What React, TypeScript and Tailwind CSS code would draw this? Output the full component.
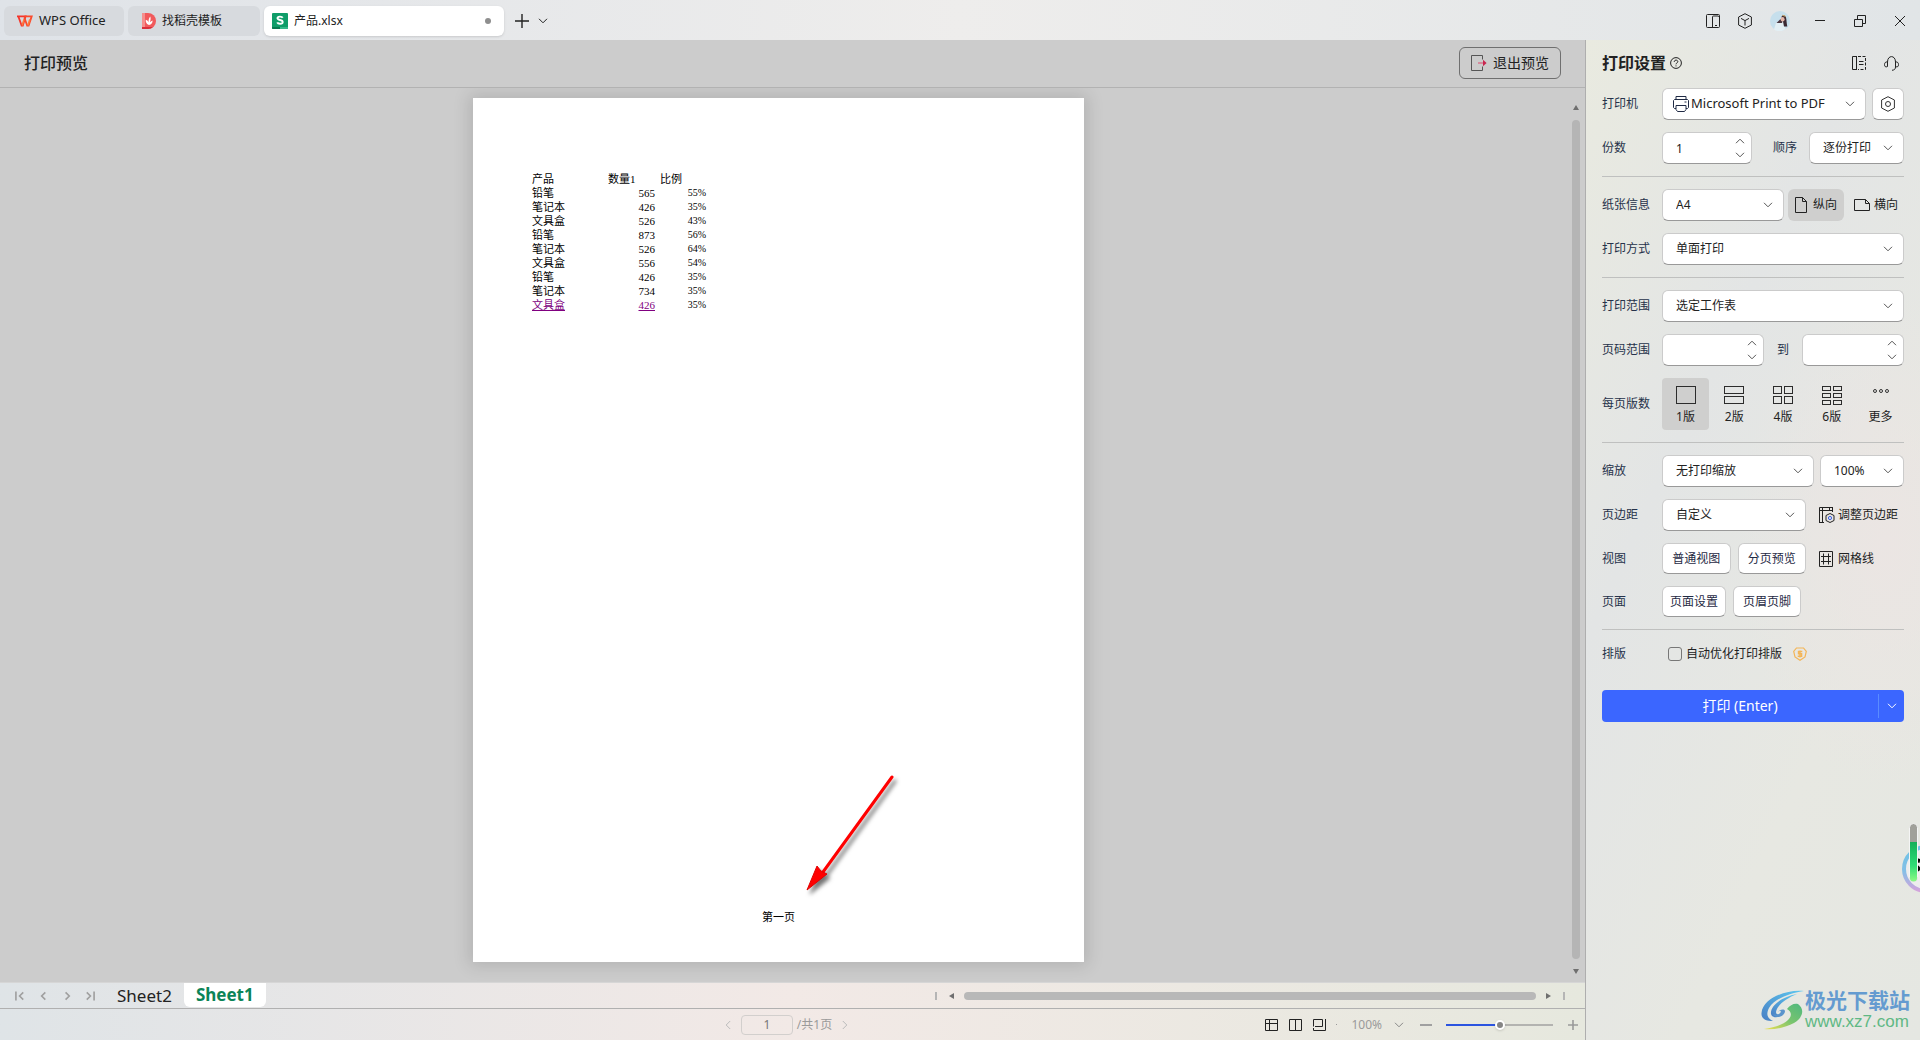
import React from 'react';
import clsx from 'clsx';

interface IconProps {
  className?: string;
}

const Chevron: React.FC<IconProps> = ({ className }) => (
  <svg viewBox="0 0 10 6" className={clsx('h-1.5 w-2.5 fill-none stroke-current', className)}>
    <path d="M1 0.8 L5 4.8 L9 0.8" />
  </svg>
);

const WpsLogo = () => (
  <svg viewBox="0 0 16 12" className="h-3 w-4 shrink-0 fill-none">
    <path d="M0 1.300H8.500L5.800 10.500H4.600L1.300 1.300" stroke="#f5352b" strokeWidth="1.800" />
    <path d="M7.500 1.300H14.700L11.600 10.500H10.200L7.300 2.500" stroke="#fa4a2c" strokeWidth="1.800" />
    <path d="M5.200 10.500L7 4.500M10.900 10.500L12.800 4.500" stroke="#ff7a3c" strokeWidth="1.600" />
  </svg>
);

const TemplateLogo = () => (
  <svg viewBox="0 0 14 16" className="h-4 w-3.5 shrink-0">
    <path d="M0 0h6a8 8 0 0 1 0 16H0z" fill="#f15a5c" />
    <path d="M0 0h3v14H0z" fill="#f58f8d" />
    <path d="M0 14h11a8 8 0 0 1-5 2H0z" fill="#d92f3a" />
    <path d="M7 12C4 11 3.600 8.500 3.800 6.800C5.400 7.400 6.200 8.200 6.600 9.400C6.400 6.800 7 4.800 8.200 3.400C9 5.200 8.600 7 7.900 9.200C8.700 8.300 9.600 7.700 10.600 7.400C10.600 10 9.400 11.500 7 12z" fill="#fff" />
  </svg>
);

const SheetLogo = () => (
  <svg viewBox="0 0 16 16" className="size-4 shrink-0">
    <rect width="16" height="16" rx="1" fill="#0f9d69" />
    <path d="M0 14h8v2H1a1 1 0 0 1-1-1z" fill="#087a50" />
    <path d="M8 14h8v1a1 1 0 0 1-1 1H8z" fill="#35b889" />
    <path d="M10.700 4.700C9.900 3.300 5.500 3 5.500 5.300C5.500 7.600 10.700 6.300 10.700 8.900C10.700 11.400 6 11.100 5.200 9.400" fill="none" stroke="#fff" strokeWidth="1.900" />
  </svg>
);

const lineIcon = 'shrink-0 fill-none stroke-current';

const PanelIcon = () => (
  <svg viewBox="0 0 14 14" className={clsx(lineIcon, 'size-3.5')}>
    <rect x="0.500" y="0.500" width="13" height="13" rx="1" />
    <path d="M6.500 13.500V3a1 1 0 0 1 1-1h4.500a1 1 0 0 1 1 1M9 11.500h2" />
  </svg>
);

const CubeIcon = () => (
  <svg viewBox="0 0 14 16" className={clsx(lineIcon, 'h-4 w-3.5')}>
    <path d="M7 0.700L13.400 4V12L7 15.300L0.600 12V4z" />
    <path d="M3 5.400L7 7.600L11 5.400M7 7.600V12.500" />
  </svg>
);

const Avatar = () => (
  <svg viewBox="0 0 20 20" className="size-5 shrink-0">
    <circle cx="10" cy="10" r="10" fill="#c6dfec" />
    <path d="M4 18.500L6 12L10 9L14 12L15.500 18A10 10 0 0 1 4 18.500z" fill="#e3eff4" />
    <path d="M11.500 6C12 3.800 15 3.300 16 6.500C16.700 9 16.500 12 17.300 15.500L14 15.500L13 10.500z" fill="#3b2a33" />
    <path d="M6.500 12L10.500 8L12.500 10.500L12 12z" fill="#4b3740" />
    <ellipse cx="12.600" cy="8.200" rx="2" ry="2.300" fill="#e3b5a8" />
    <path d="M12.500 4.300L15.500 5.300" stroke="#d8b36a" />
  </svg>
);

const RestoreIcon = () => (
  <svg viewBox="0 0 12 12" className={clsx(lineIcon, 'size-3')}>
    <path d="M0.500 4.500H8.500V11.500H0.500zM3.500 4.500V0.500H11.500V8.500H8.500" />
  </svg>
);

const CloseIcon = () => (
  <svg viewBox="0 0 12 12" className={clsx(lineIcon, 'size-3')}>
    <path d="M1 1L11 11M11 1L1 11" />
  </svg>
);

const HelpIcon = () => (
  <svg viewBox="0 0 12 12" className={clsx(lineIcon, 'size-3')}>
    <circle cx="6" cy="6" r="5.400" />
    <path d="M4.200 4.900C4.200 2.500 7.800 2.600 7.800 4.700C7.800 5.900 6 5.900 6 7.300M6 8.400V9.400" />
  </svg>
);

const DockIcon = () => (
  <svg viewBox="0 0 14 14" className={clsx(lineIcon, 'size-3.5')}>
    <path d="M5 0.500H0.500V13.500H5M4.500 0.500V13.500M7 5.500H11.500M7 8.500H11.500" />
    <path d="M6 0.500H13.500V13.500H6" strokeDasharray="3 1.500" />
  </svg>
);

const HeadsetIcon = () => (
  <svg viewBox="0 0 15 15" className={clsx(lineIcon, 'size-[15px]')}>
    <path d="M3.500 10.500V6C3.500 -1.200 11.500 -1.200 11.500 6V11C11.500 13 10.500 14 8 14.300" />
    <path d="M3.500 6C1.500 5.500 0.500 7 0.500 8.500C0.500 10.500 1.500 11.500 3.500 10.500M11.500 6C13.500 5.500 14.500 7 14.500 8.500C14.500 10.500 13.500 11.500 11.500 10.500" />
  </svg>
);

const PrinterIcon = () => (
  <svg viewBox="0 0 16 16" className={clsx(lineIcon, 'size-4')}>
    <path d="M3 3.500V0.500H13V3.500M3 12.500H1.500L0.500 11.500V4.500L1.500 3.500H14.500L15.500 4.500V11.500L14.500 12.500H13M11.500 6H13.500" />
    <path d="M3 9.500H13V13.500L11.500 15.500H4.500L3 13.500z" />
  </svg>
);

const GearIcon = () => (
  <svg viewBox="0 0 14 16" className={clsx(lineIcon, 'h-4 w-3.5')}>
    <path d="M7 0.700L13.400 4V12L7 15.300L0.600 12V4z" />
    <circle cx="7" cy="8" r="2.500" />
  </svg>
);

const ExitIcon = () => (
  <svg viewBox="0 0 16 16" className="size-4 shrink-0 fill-none">
    <path d="M11.500 4.500V0.500H0.500V15.500H11.500V11.500" stroke="#555" />
    <path d="M7 8H13" stroke="#d8708a" strokeWidth="1.400" />
    <path d="M12 4.800L15.600 8L12 11.200z" fill="#c8264f" />
  </svg>
);

const PortraitIcon = () => (
  <svg viewBox="0 0 12 16" className={clsx(lineIcon, 'h-4 w-3')}>
    <path d="M0.500 0.500H7.500L11.500 4.500V15.500H0.500zM7.500 0.500V4.500H11.500" />
  </svg>
);

const LandscapeIcon = () => (
  <svg viewBox="0 0 16 12" className={clsx(lineIcon, 'h-3 w-4')}>
    <path d="M0.500 0.500H11.500L15.500 4.500V11.500H0.500zM11.500 0.500V4.500H15.500" />
  </svg>
);

const MarginIcon = () => (
  <svg viewBox="0 0 16 16" className={clsx(lineIcon, 'size-4')}>
    <path d="M5 15.500H0M0.500 16V0.500H14M3.500 0V15.500M0.500 3.500H14M13.500 0V5M10.500 0.500V3.500" />
    <path d="M11 6.500L15 8.500V13.500L11 15.500L7 13.500V8.500z" />
    <circle cx="11" cy="11" r="1.600" stroke="#3a62e8" />
  </svg>
);

const GridIcon = () => (
  <svg viewBox="0 0 14 16" className={clsx(lineIcon, 'h-4 w-3.5')}>
    <path d="M0.500 0.500H13.500V15.500H0.500zM4.500 2.500V13.500M9.500 2.500V13.500M2 5.500H12M2 10.500H12" />
  </svg>
);

const CoinIcon = () => (
  <svg viewBox="0 0 14 14" className="size-3.5 shrink-0 fill-none stroke-[#f3b557]">
    <path d="M3.500 1H10.500L13.300 4.500L12 10L7 13.300L2 10L0.700 4.500z" strokeWidth="1.200" />
    <path d="M9.300 4.500H5.500V6.800H8.600V9.300H4.700M7 3.400V10.400" strokeWidth="1.400" />
  </svg>
);

const Select: React.FC<{ label: string; value: string; className?: string; pad?: string; icon?: React.ReactNode }> = ({
  label,
  value,
  className,
  pad = 'pl-[13px] text-xs',
  icon,
}) => (
  <div
    className={clsx(
      'relative flex h-8 items-center rounded-md border border-[#cbcbcb] border-b-[#999] bg-white text-[#222]',
      className
    )}
  >
    {icon}
    <select aria-label={label} defaultValue={value} className={clsx('h-full w-full appearance-none bg-transparent outline-none', pad)}>
      <option>{value}</option>
    </select>
    <Chevron className="pointer-events-none absolute right-2.5 text-[#555]" />
  </div>
);

const NumberField: React.FC<{ id: string; value?: string; className?: string }> = ({ id, value = '', className }) => (
  <div className={clsx('flex h-8 items-center rounded-md border border-[#cbcbcb] border-b-[#999] bg-white', className)}>
    <input id={id} type="text" defaultValue={value} className="h-full w-full min-w-0 bg-transparent pl-[13px] text-xs text-[#222] outline-none" />
    <div className="flex flex-col gap-2 pr-1.5 text-[#555]">
      <button aria-label="增加"><Chevron className="block h-1.5 w-2 rotate-180" /></button>
      <button aria-label="减少"><Chevron className="block h-1.5 w-2" /></button>
    </div>
  </div>
);

const Row: React.FC<{ label: string; htmlFor?: string; children: React.ReactNode }> = ({ label, htmlFor, children }) => (
  <div className="flex items-center">
    <label htmlFor={htmlFor} className="w-15 shrink-0 text-xs text-[#26324a]">{label}</label>
    <div className="flex min-w-0 flex-1 items-center">{children}</div>
  </div>
);

const PillButton: React.FC<{ children: React.ReactNode; className?: string }> = ({ children, className }) => (
  <button className={clsx('h-[31px] rounded-md border border-[#cbcbcb] border-b-[#999] bg-white text-xs text-[#1f2a44]', className)}>
    {children}
  </button>
);

const Divider = () => <hr className="border-[#bfc0bf]" />;

const layouts = [
  { name: '1版', cols: 1, rows: 1 },
  { name: '2版', cols: 1, rows: 2 },
  { name: '4版', cols: 2, rows: 2 },
  { name: '6版', cols: 2, rows: 3 },
];

const LayoutGlyph: React.FC<{ cols: number; rows: number }> = ({ cols, rows }) => {
  const cellW = cols === 1 ? 19 : 8;
  const cellH = rows === 1 ? 17 : rows === 2 ? 7 : 4;
  const stepY = rows === 2 ? 10 : 7;
  const cells = [];
  for (let r = 0; r < rows; r++) {
    for (let c = 0; c < cols; c++) {
      cells.push(<rect key={`${r}-${c}`} x={0.5 + c * 11} y={0.5 + r * stepY} width={cellW} height={cellH} />);
    }
  }
  return <svg viewBox="0 0 20 19" className="h-[19px] w-5 fill-none stroke-[#2c2c2c]">{cells}</svg>;
};

const TitleBar = () => (
  <header className="flex h-10 items-center bg-linear-to-r from-[#dfe3e8] via-[#eeedec] to-[#e1e5e7] pt-0.5 pl-1 text-xs text-[#222]">
    <button className="flex h-[30px] w-30 items-center gap-1.5 rounded-md bg-[#d7dade] pl-[13px] text-[13px]">
      <WpsLogo />
      WPS Office
    </button>
    <button className="ml-1 flex h-[30px] w-[132px] items-center gap-1.5 rounded-md bg-[#d7dade] pl-3.5">
      <TemplateLogo />
      找稻壳模板
    </button>
    <button className="ml-1 flex h-[30px] w-60 items-center gap-1.5 rounded-md bg-white pr-[13px] pl-2 shadow-sm">
      <SheetLogo />
      产品.xlsx
      <span className="ml-auto size-1.5 rounded-full bg-[#8e8e8e]" />
    </button>
    <button aria-label="新建标签" className="ml-2.5">
      <svg viewBox="0 0 16 16" className={clsx(lineIcon, 'size-4')}><path d="M8 1V15M1 8H15" strokeWidth="1.400" /></svg>
    </button>
    <button aria-label="标签列表" className="ml-2"><Chevron className="w-2" /></button>
    <div className="ml-auto flex items-center pr-3.5">
      <button aria-label="侧栏" className="mr-[18px]"><PanelIcon /></button>
      <button aria-label="应用" className="mr-[18px]"><CubeIcon /></button>
      <button aria-label="账户" className="mr-6"><Avatar /></button>
      <button aria-label="最小化" className="mr-7">
        <svg viewBox="0 0 12 12" className={clsx(lineIcon, 'size-3')}><path d="M1 5.500H11" /></svg>
      </button>
      <button aria-label="还原" className="mr-7"><RestoreIcon /></button>
      <button aria-label="关闭"><CloseIcon /></button>
    </div>
  </header>
);

const sheetRows = [
  ['铅笔', '565', '55%'],
  ['笔记本', '426', '35%'],
  ['文具盒', '526', '43%'],
  ['铅笔', '873', '56%'],
  ['笔记本', '526', '64%'],
  ['文具盒', '556', '54%'],
  ['铅笔', '426', '35%'],
  ['笔记本', '734', '35%'],
  ['文具盒', '426', '35%'],
];

const PaperPage = () => (
  <div className="relative flex aspect-[210/297] w-[611px] flex-col items-center justify-between bg-white pt-[74px] pb-[38px] font-['Liberation_Serif','Noto_Sans_CJK_SC',serif] text-[11px] leading-[14px] text-black shadow-[0_0_16px_4px_rgba(0,0,0,0.12)]">
    <table className="ml-[59px] table-fixed self-start">
      <thead>
        <tr className="text-left">
          <th className="w-[76px] p-0 font-normal">产品</th>
          <th className="w-[47px] p-0 font-normal">数量1</th>
          <th className="w-[51px] p-0 pl-[5px] font-normal">比例</th>
        </tr>
      </thead>
      <tbody>
        {sheetRows.map(([name, count, ratio], i) => {
          const linked = i === sheetRows.length - 1;
          return (
            <tr key={i}>
              <td className={clsx('p-0', linked && 'text-[#800080] underline')}>{name}</td>
              <td className={clsx('p-0 text-right', linked && 'text-[#800080] underline')}>{count}</td>
              <td className="p-0 text-right text-[10px]">{ratio}</td>
            </tr>
          );
        })}
      </tbody>
    </table>
    <p>第一页</p>
    <svg viewBox="0 0 100 130" className="absolute top-[670px] left-[326px] h-[130px] w-[100px] drop-shadow-[3px_4px_2px_rgba(0,0,0,0.55)]">
      <path d="M93 9L24 104" stroke="#f00" strokeWidth="3" strokeLinecap="round" />
      <path d="M8 122L18 98L22 103L28 106Z" fill="#f00" stroke="#e00000" strokeLinejoin="round" />
    </svg>
  </div>
);

const PreviewArea = () => (
  <section className="flex flex-1 flex-col bg-[#cccccc]">
    <div className="flex h-12 items-center justify-between border-b border-[#b2b2b2] px-6 pb-0.5">
      <h1 className="text-base font-medium text-[#222]">打印预览</h1>
      <button className="flex h-8 w-[102px] items-center justify-center gap-1.5 rounded-md border border-[#6f6f6f] text-sm text-[#222]">
        <ExitIcon />
        退出预览
      </button>
    </div>
    <div className="flex flex-1">
      <div className="flex flex-1 items-start justify-center overflow-hidden pt-2.5 pb-[18px]">
        <PaperPage />
      </div>
      <div className="flex w-7 flex-col items-center pt-[17px] pb-2 pl-2.5">
        <span className="border-x-3 border-b-5 border-x-transparent border-b-[#6f6f6f]" />
        <span className="my-2.5 w-2 flex-1 rounded-full bg-[#b5b5b5]" />
        <span className="border-x-3 border-t-5 border-x-transparent border-t-[#6f6f6f]" />
      </div>
    </div>
  </section>
);

const SheetTabs = () => (
  <nav className="flex h-[27px] items-center border-t border-b border-t-[#d6d6d6] border-b-[#b0b0b0] pr-5">
    <div className="flex items-center gap-3 pl-[15px] text-[#a0a0a0]">
      {['M1 1V11M9 2L5 6L9 10', 'M8 2L4 6L8 10', 'M5 2L9 6L5 10', 'M3 2L7 6L3 10M11 1V11'].map((d) => (
        <button key={d} aria-label="切换工作表">
          <svg viewBox="0 0 12 12" className={clsx(lineIcon, 'block h-3 w-[11px]')}><path d={d} strokeWidth="1.800" /></svg>
        </button>
      ))}
    </div>
    <button className="ml-5 px-0.5 text-[17px] leading-6 text-[#222]">Sheet2</button>
    <button className="ml-2.5 h-6 self-start rounded-b-md bg-white px-3 text-[17px] leading-6 font-bold text-[#0b8457]">Sheet1</button>
    <div className="ml-auto flex w-[630px] items-center">
      <span className="h-2 w-0.5 bg-[#b5b5b5]" />
      <span className="mr-2.5 ml-3 border-y-3 border-r-5 border-y-transparent border-r-[#6f6f6f]" />
      <span className="h-2 flex-1 rounded-full bg-[#b8b8b8]" />
      <span className="mr-3 ml-2.5 border-y-3 border-l-5 border-y-transparent border-l-[#6f6f6f]" />
      <span className="h-2 w-0.5 bg-[#b5b5b5]" />
    </div>
  </nav>
);

const StatusBar = () => (
  <footer className="grid h-[31px] grid-cols-[1fr_auto_1fr] items-center text-xs text-[#9a9a9a]">
    <span />
    <div className="flex items-center pr-3">
      <button aria-label="上一页"><Chevron className="rotate-90 text-[#bbb]" /></button>
      <input aria-label="页码" defaultValue="1" className="mx-2 h-5 w-[52px] rounded border border-[#d2cfcd] bg-transparent text-center text-[#777]" />
      <span className="-ml-1 pr-2">/共1页</span>
      <button aria-label="下一页"><Chevron className="-rotate-90 text-[#bbb]" /></button>
    </div>
    <div className="flex items-center justify-end pr-1.5">
      <div className="flex gap-[11px] text-[#222]">
        <button aria-label="普通视图">
          <svg viewBox="0 0 13 12" className={clsx(lineIcon, 'block h-3 w-[13px]')}><path d="M0.500 0.500H12.500V11.500H0.500zM0.500 4.500H12.500M4.500 0.500V11.500" /></svg>
        </button>
        <button aria-label="分页视图">
          <svg viewBox="0 0 13 12" className={clsx(lineIcon, 'block h-3 w-[13px]')}><path d="M0.500 0.500H12.500V11.500H0.500zM6.500 0.500V11.500" /></svg>
        </button>
        <button aria-label="页面布局">
          <svg viewBox="0 0 13 12" className={clsx(lineIcon, 'block h-3 w-[13px]')}><path d="M0.500 7.500V0.500H9.500V7.500H2M12.500 0V11.500H0.500V9" /></svg>
        </button>
      </div>
      <span className="ml-2.5 size-px bg-[#999]" />
      <span className="ml-3.5">100%</span>
      <button aria-label="缩放比例"><Chevron className="ml-3 w-2 text-[#888]" /></button>
      <button aria-label="缩小" className="ml-4 h-4 w-3">
        <span className="block h-0.5 w-3 bg-[#a0a0a0]" />
      </button>
      <input
        type="range"
        aria-label="缩放"
        defaultValue={50}
        className="mx-3.5 h-3 w-[107px] appearance-none bg-[linear-gradient(90deg,#2b54e0_50%,#b3b3b0_50%)] bg-[length:100%_2px] bg-center bg-no-repeat [&::-webkit-slider-thumb]:size-2.5 [&::-webkit-slider-thumb]:appearance-none [&::-webkit-slider-thumb]:rounded-full [&::-webkit-slider-thumb]:border-2 [&::-webkit-slider-thumb]:border-white [&::-webkit-slider-thumb]:bg-[#858585] [&::-webkit-slider-thumb]:shadow-sm"
      />
      <button aria-label="放大">
        <svg viewBox="0 0 12 12" className={clsx(lineIcon, 'block size-3')}><path d="M6 1V11M1 6H11" strokeWidth="1.600" /></svg>
      </button>
    </div>
  </footer>
);

const PrintSettings = () => (
  <aside className="w-[335px] shrink-0 border-l border-[#aeaeae] bg-[radial-gradient(ellipse_at_90%_50%,#ebe5e3_0%,transparent_35%),linear-gradient(115deg,#e9eae0_0%,#e3e5e5_35%,#e7e8e2_70%,#e5e7e2_100%)] px-4">
    <div className="flex h-12 items-center pb-0.5 text-[#222]">
      <h2 className="text-base font-bold">打印设置</h2>
      <button aria-label="帮助" className="ml-1"><HelpIcon /></button>
      <button aria-label="停靠" className="ml-auto"><DockIcon /></button>
      <button aria-label="客服" className="mr-[5px] ml-[18px]"><HeadsetIcon /></button>
    </div>
    <div className="flex flex-col gap-3">
      <Row label="打印机">
        <Select label="打印机" value="Microsoft Print to PDF" className="flex-1 pl-2.5" pad="pl-0.5 text-[13px]" icon={<span className="text-[#1f2a44]"><PrinterIcon /></span>} />
        <button aria-label="打印机属性" className="ml-1.5 flex size-8 items-center justify-center rounded-md border border-[#cbcbcb] border-b-[#999] bg-white text-[#333]">
          <GearIcon />
        </button>
      </Row>
      <Row label="份数" htmlFor="copies">
        <NumberField id="copies" value="1" className="w-[90px]" />
        <span className="ml-[21px] flex-1 text-xs text-[#26324a]">顺序</span>
        <Select label="顺序" value="逐份打印" className="w-[95px]" />
      </Row>
      <Divider />
      <Row label="纸张信息">
        <Select label="纸张" value="A4" className="flex-1" />
        <button className="ml-1 flex h-8 w-14 items-center justify-center gap-1.5 rounded-md bg-[#cfcfce] text-xs text-[#222]">
          <PortraitIcon />
          纵向
        </button>
        <button className="ml-1 flex h-8 w-14 items-center justify-center gap-1 text-xs text-[#222]">
          <LandscapeIcon />
          横向
        </button>
      </Row>
      <Row label="打印方式">
        <Select label="打印方式" value="单面打印" className="flex-1" />
      </Row>
      <Divider />
      <Row label="打印范围">
        <Select label="打印范围" value="选定工作表" className="flex-1" />
      </Row>
      <Row label="页码范围" htmlFor="page-from">
        <NumberField id="page-from" className="flex-1" />
        <label htmlFor="page-to" className="mx-[13px] text-xs text-[#26324a]">到</label>
        <NumberField id="page-to" className="flex-1" />
      </Row>
      <Row label="每页版数">
        <div className="flex flex-1 justify-between">
          {layouts.map((l, i) => (
            <button
              key={l.name}
              className={clsx('flex h-[52px] w-[47px] flex-col items-center gap-1 rounded pt-2 text-xs text-[#222]', i === 0 && 'bg-[#cfcfce]')}
            >
              <LayoutGlyph cols={l.cols} rows={l.rows} />
              {l.name}
            </button>
          ))}
          <button className="flex h-[52px] w-[47px] flex-col items-center gap-1 rounded pt-2 text-xs text-[#222]">
            <svg viewBox="0 0 20 19" className="h-[19px] w-5 fill-none stroke-[#333]">
              <circle cx="4" cy="5" r="1.500" />
              <circle cx="10" cy="5" r="1.500" />
              <circle cx="16" cy="5" r="1.500" />
            </svg>
            更多
          </button>
        </div>
      </Row>
      <Divider />
      <Row label="缩放">
        <Select label="缩放方式" value="无打印缩放" className="flex-1" />
        <Select label="缩放比例" value="100%" className="ml-1.5 w-[84px]" />
      </Row>
      <Row label="页边距">
        <Select label="页边距" value="自定义" className="flex-1" />
        <button className="ml-[13px] flex w-[85px] items-center gap-[3px] text-xs whitespace-nowrap text-[#222]">
          <MarginIcon />
          调整页边距
        </button>
      </Row>
      <Row label="视图">
        <PillButton className="flex-1">普通视图</PillButton>
        <PillButton className="ml-[7px] flex-1">分页预览</PillButton>
        <button className="ml-[13px] flex w-[85px] items-center gap-[5px] text-xs text-[#222]">
          <GridIcon />
          网格线
        </button>
      </Row>
      <Row label="页面">
        <PillButton className="w-16">页面设置</PillButton>
        <PillButton className="ml-[7px] w-17">页眉页脚</PillButton>
      </Row>
      <Divider />
      <Row label="排版">
        <label className="flex h-6 items-center gap-1 pl-1.5 text-xs text-[#222]">
          <input type="checkbox" className="size-3.5 appearance-none rounded-[3px] border border-[#777]" />
          自动优化打印排版
        </label>
        <span className="ml-[11px]"><CoinIcon /></span>
      </Row>
    </div>
    <div className="mt-6 flex h-8 items-center rounded bg-[#3b66ff] text-white">
      <button className="h-full flex-1 text-sm">打印 (Enter)</button>
      <button aria-label="打印选项" className="flex h-6 w-[26px] items-center justify-center border-l border-[#5a8cff]">
        <Chevron />
      </button>
    </div>
  </aside>
);

const FloatingWidget = () => (
  <div className="absolute right-0 bottom-[147px] h-[70px] w-5">
    <svg viewBox="0 0 20 70" className="h-full w-full">
      <defs>
        <linearGradient id="ring" x1="0" y1="0" x2="0" y2="1">
          <stop offset="0" stopColor="#6cc3e6" />
          <stop offset="0.550" stopColor="#84bfe6" />
          <stop offset="1" stopColor="#d3a4dc" />
        </linearGradient>
        <linearGradient id="level" x1="0" y1="0" x2="0" y2="1">
          <stop offset="0" stopColor="#14b05a" />
          <stop offset="0.600" stopColor="#2fdc75" />
          <stop offset="1" stopColor="#8dfb86" />
        </linearGradient>
      </defs>
      <circle cx="26" cy="46" r="22" fill="#ededed" stroke="url(#ring)" strokeWidth="4" />
      <path d="M13 36L20 38M17 44L20 47" stroke="#000" strokeWidth="4" />
      <rect x="9.500" y="0.500" width="8" height="58" rx="4" fill="#a0a09a" stroke="#f5f5f5" />
      <path d="M10 19H17V55a3.500 3.500 0 0 1-7 0z" fill="url(#level)" />
    </svg>
  </div>
);

const Watermark = () => (
  <div className="absolute right-2.5 bottom-2 flex items-center">
    <svg viewBox="0 0 44 40" className="h-10 w-11">
      <defs>
        <linearGradient id="swirlBlue" x1="1" y1="0" x2="0" y2="1">
          <stop offset="0" stopColor="#5cc8f0" />
          <stop offset="1" stopColor="#4a7fc4" />
        </linearGradient>
        <linearGradient id="swirlGreen" x1="1" y1="0" x2="0" y2="1">
          <stop offset="0" stopColor="#4fb87e" />
          <stop offset="0.500" stopColor="#79c46e" />
          <stop offset="1" stopColor="#f0e050" />
        </linearGradient>
      </defs>
      <path d="M43 1C26 -1 2 8 0.500 23C0 29 5 31 12 31C6 28 5 24 8 18C14 8 30 3 43 1z" fill="url(#swirlBlue)" />
      <path d="M36 4C20 7 9 16 10 24C11 29 21 28 23 22C21 25 15 26 15 22C16 15 26 8 36 4z" fill="url(#swirlBlue)" />
      <path d="M12 24C15 30 24 26 24 21C23 18 18 20 17 22C20 19 21 22 18 24C16 25 14 25 12 24z" fill="#5b94cc" />
      <path d="M37 14C44 19 42 28 33 33C24 38 12 40 3 39C14 37 22 35 27 30C31 26 31 22 26 19C29 15 33 13 37 14z" fill="url(#swirlGreen)" />
    </svg>
    <div className="flex flex-col">
      <span className="text-[21px] leading-6 font-bold text-[#649bd0]">极光下载站</span>
      <span className="font-['Liberation_Sans',sans-serif] text-[17px] leading-5 text-[#60b884]">www.xz7.com</span>
    </div>
  </div>
);

export default function App() {
  return (
    <div className="relative flex min-h-screen flex-col overflow-hidden font-['Noto_Sans','Noto_Sans_CJK_SC',sans-serif]">
      <TitleBar />
      <div className="flex flex-1">
        <main className="flex min-w-0 flex-1 flex-col bg-linear-to-r from-[#dfe4e7] via-[#f2e9e6] to-[#e6e8de]">
          <PreviewArea />
          <SheetTabs />
          <StatusBar />
        </main>
        <PrintSettings />
      </div>
      <FloatingWidget />
      <Watermark />
    </div>
  );
}
